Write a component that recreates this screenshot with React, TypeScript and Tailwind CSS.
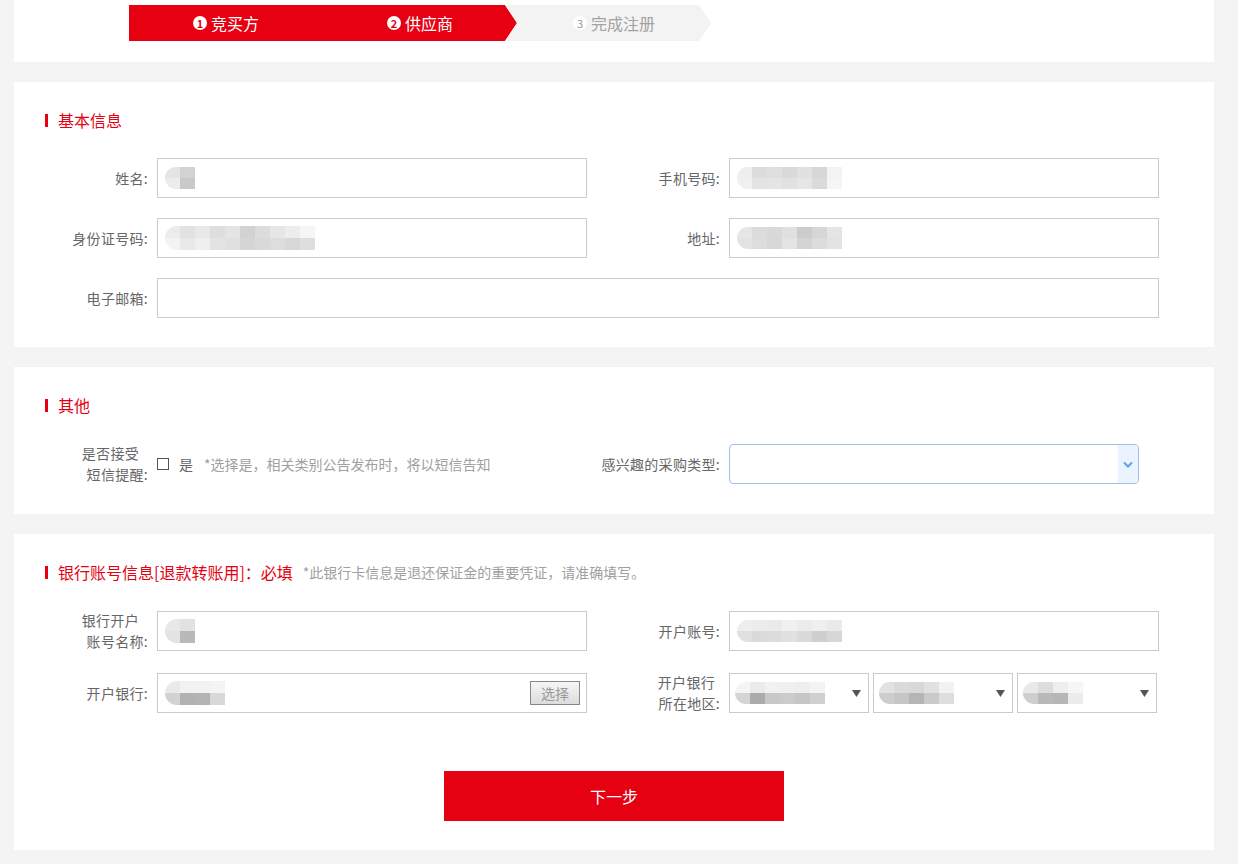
import React from "react";

type Cells = string[][];

const Mosaic = ({ cells, cw, ch }: { cells: Cells; cw: string; ch: string }) => {
  return (
    <div className="flex flex-col overflow-hidden rounded-l-full">
      {cells.map((row, i) => (
        <div key={i} className="flex">
          {row.map((c, j) => (
            <div key={j} className={`${cw} ${ch} ${c}`} />
          ))}
        </div>
      ))}
    </div>
  );
};

const nameCells: Cells = [
  ["bg-[#e4e4e4]", "bg-[#d2d2d2]"],
  ["bg-[#ececec]", "bg-[#c9c9c9]"],
];
const phoneCells: Cells = [
  ["bg-[#eeeeee]", "bg-[#dcdcdc]", "bg-[#dfdfdf]", "bg-[#d9d9d9]", "bg-[#e1e1e1]", "bg-[#d7d7d7]", "bg-[#f3f3f3]"],
  ["bg-[#f0f0f0]", "bg-[#e3e3e3]", "bg-[#e5e5e5]", "bg-[#e1e1e1]", "bg-[#e6e6e6]", "bg-[#dadada]", "bg-[#f5f5f5]"],
];
const idCells: Cells = [
  ["bg-[#ececec]", "bg-[#e2e2e2]", "bg-[#e8e8e8]", "bg-[#dedede]", "bg-[#e4e4e4]", "bg-[#d2d2d2]", "bg-[#dcdcdc]", "bg-[#e6e6e6]", "bg-[#ededed]", "bg-[#f6f6f6]"],
  ["bg-[#f3f3f3]", "bg-[#e9e9e9]", "bg-[#efefef]", "bg-[#e3e3e3]", "bg-[#e0e0e0]", "bg-[#d5d5d5]", "bg-[#d9d9d9]", "bg-[#dddddd]", "bg-[#d8d8d8]", "bg-[#dedede]"],
];
const addrCells: Cells = [
  ["bg-[#e6e6e6]", "bg-[#dcdcdc]", "bg-[#d9d9d9]", "bg-[#e0e0e0]", "bg-[#cccccc]", "bg-[#d6d6d6]", "bg-[#e5e5e5]", "bg-[#ffffff]"],
  ["bg-[#e3e3e3]", "bg-[#dddddd]", "bg-[#d8d8d8]", "bg-[#e4e4e4]", "bg-[#d4d4d4]", "bg-[#dcdcdc]", "bg-[#e3e3e3]", "bg-[#ffffff]"],
];
const accNameCells: Cells = [
  ["bg-[#e8e8e8]", "bg-[#e2e2e2]"],
  ["bg-[#e3e3e3]", "bg-[#b9b9b9]"],
];
const accNoCells: Cells = [
  ["bg-[#eeeeee]", "bg-[#ececec]", "bg-[#eaeaea]", "bg-[#f0f0f0]", "bg-[#ececec]", "bg-[#efefef]", "bg-[#eaeaea]", "bg-[#ffffff]"],
  ["bg-[#e0e0e0]", "bg-[#dadada]", "bg-[#dcdcdc]", "bg-[#e1e1e1]", "bg-[#dadada]", "bg-[#cfcfcf]", "bg-[#d7d7d7]", "bg-[#ffffff]"],
];
const bankCells: Cells = [
  ["bg-[#eaeaea]", "bg-[#f2f2f2]", "bg-[#f2f2f2]", "bg-[#f4f4f4]", "bg-[#ffffff]"],
  ["bg-[#d2d2d2]", "bg-[#b2b2b2]", "bg-[#b4b4b4]", "bg-[#d8d8d8]", "bg-[#ffffff]"],
];
const r1Cells: Cells = [
  ["bg-[#f4f4f4]", "bg-[#ebebeb]", "bg-[#f1f1f1]", "bg-[#f0f0f0]", "bg-[#eeeeee]", "bg-[#f3f3f3]"],
  ["bg-[#d4d4d4]", "bg-[#ababab]", "bg-[#c8c8c8]", "bg-[#cbcbcb]", "bg-[#c6c6c6]", "bg-[#d0d0d0]"],
];
const r2Cells: Cells = [
  ["bg-[#e2e2e2]", "bg-[#dadada]", "bg-[#d8d8d8]", "bg-[#e1e1e1]", "bg-[#f2f2f2]"],
  ["bg-[#cdcdcd]", "bg-[#c6c6c6]", "bg-[#b5b5b5]", "bg-[#cacaca]", "bg-[#dedede]"],
];
const r3Cells: Cells = [
  ["bg-[#e9e9e9]", "bg-[#dddddd]", "bg-[#eeeeee]", "bg-[#f6f6f6]"],
  ["bg-[#cecece]", "bg-[#b9b9b9]", "bg-[#b6b6b6]", "bg-[#ececec]"],
];

const Title = ({ children }: { children: React.ReactNode }) => (
  <div className="flex items-center pl-[31px] h-5">
    <span className="w-[3px] h-[13px] bg-[#e60012] mr-[10px]" />
    {children}
  </div>
);

const Label = ({ w, children }: { w: string; children: React.ReactNode }) => (
  <div className={`${w} text-right pr-[2px] text-[14px] leading-[21px] text-[#666] tracking-[0.3px]`}>{children}</div>
);

const TwoLine = ({ w, a, b, pad }: { w: string; a: string; b: string; pad: string }) => (
  <div className={`${w} h-10 flex flex-col justify-center items-end pr-[2px] text-[14px] leading-[21px] text-[#666] tracking-[0.3px]`}>
    <span className={pad}>{a}</span>
    <span>{b}</span>
  </div>
);

const Input = ({ w = "w-[430px]", children }: { w?: string; children?: React.ReactNode }) => (
  <div className={`ml-[7px] ${w} h-10 border border-[#cbcbcb] bg-white flex items-center pl-[7px]`}>{children}</div>
);

const Tri = () => (
  <svg width="9" height="7" viewBox="0 0 9 7" className="absolute right-[7px] top-[16px]">
    <polygon points="0,0 9,0 4.5,7" fill="#555" />
  </svg>
);

const Region = ({ cells, first }: { cells: Cells; first?: boolean }) => (
  <div className={`${first ? "ml-[7px]" : "ml-[4px]"} relative w-[140px] h-10 border border-[#cbcbcb] bg-white flex items-center pl-[5px]`}>
    <Mosaic cells={cells} cw="w-[15px]" ch="h-[11px]" />
    <Tri />
  </div>
);

export default function App() {
  return (
    <div className="min-h-[864px] bg-[#f4f4f4] font-['Noto_Sans_CJK_SC',sans-serif] pb-[14px]">
      {/* steps */}
      <div className="ml-[14px] w-[1200px] h-[62px] bg-white pt-[5px]">
        <div className="ml-[115px] flex h-9 text-[16px] leading-9">
          <div className="w-[194px] bg-[#e60012] text-white flex items-center justify-center">
            <span className="w-[14px] h-[14px] rounded-full bg-white text-[#e60012] text-[11px] font-bold leading-[14px] text-center mr-[4px]">1</span>
            竞买方
          </div>
          <div className="w-[194px] bg-[#e60012] text-white flex items-center justify-center [clip-path:polygon(0_0,calc(100%-12px)_0,100%_50%,calc(100%-12px)_100%,0_100%)]">
            <span className="w-[14px] h-[14px] rounded-full bg-white text-[#e60012] text-[11px] font-bold leading-[14px] text-center mr-[4px]">2</span>
            供应商
          </div>
          <div className="-ml-[12px] w-[206px] pl-[12px] bg-[#f3f3f3] text-[#a3a3a3] flex items-center justify-center [clip-path:polygon(0_0,calc(100%-12px)_0,100%_50%,calc(100%-12px)_100%,0_100%,12px_50%)]">
            <span className="w-[14px] h-[14px] rounded-full bg-white text-[#999] text-[11px] leading-[14px] text-center mr-[4px]">3</span>
            完成注册
          </div>
        </div>
      </div>

      {/* 基本信息 */}
      <div className="ml-[14px] mt-5 w-[1200px] bg-white pt-[28px] pb-[29px]">
        <Title>
          <span className="text-[16px] text-[#e60012]">基本信息</span>
        </Title>
        <div className="mt-[28px] pl-[43px] flex flex-col gap-5">
          <div className="flex items-center">
            <Label w="w-[93px]">姓名:</Label>
            <Input>
              <Mosaic cells={nameCells} cw="w-[15px]" ch="h-[11px]" />
            </Input>
            <Label w="w-[135px]">手机号码:</Label>
            <Input>
              <Mosaic cells={phoneCells} cw="w-[15px]" ch="h-[11px]" />
            </Input>
          </div>
          <div className="flex items-center">
            <Label w="w-[93px]">身份证号码:</Label>
            <Input>
              <Mosaic cells={idCells} cw="w-[15px]" ch="h-[12px]" />
            </Input>
            <Label w="w-[135px]">地址:</Label>
            <Input>
              <Mosaic cells={addrCells} cw="w-[15px]" ch="h-[11px]" />
            </Input>
          </div>
          <div className="flex items-center">
            <Label w="w-[93px]">电子邮箱:</Label>
            <Input w="w-[1002px]" />
          </div>
        </div>
      </div>

      {/* 其他 */}
      <div className="ml-[14px] mt-5 w-[1200px] bg-white pt-[28px] pb-[30px]">
        <Title>
          <span className="text-[16px] text-[#e60012]">其他</span>
        </Title>
        <div className="mt-[29px] pl-[26px] flex items-center">
          <TwoLine w="w-[110px]" a="是否接受" b="短信提醒:" pad="mr-[9px]" />
          <div className="ml-[7px] w-[430px] flex items-center text-[14px]">
            <span className="w-[12px] h-[12px] border border-[#555] bg-white" />
            <span className="ml-[10px] text-[#666]">是</span>
            <span className="ml-[11px] text-[#a0a0a0]">*选择是，相关类别公告发布时，将以短信告知</span>
          </div>
          <Label w="w-[135px]">感兴趣的采购类型:</Label>
          <div className="ml-[7px] w-[410px] h-10 border border-[#9dc1ec] rounded-[4px] bg-white flex justify-end overflow-hidden">
            <div className="w-[20px] h-full bg-[#eaf3fe] flex items-center justify-center">
              <svg width="10" height="7" viewBox="0 0 10 7">
                <polyline points="1,1.5 5,5.5 9,1.5" fill="none" stroke="#5ea3e9" strokeWidth="2" />
              </svg>
            </div>
          </div>
        </div>
      </div>

      {/* 银行账号信息 */}
      <div className="ml-[14px] mt-5 w-[1200px] bg-white pt-[28px] pb-[29px]">
        <Title>
          <span className="text-[16px] text-[#e60012]">银行账号信息[退款转账用]：必填</span>
          <span className="ml-[10px] text-[14px] text-[#a0a0a0]">*此银行卡信息是退还保证金的重要凭证，请准确填写。</span>
        </Title>
        <div className="mt-[29px] pl-[26px] flex flex-col gap-[22px]">
          <div className="flex items-center">
            <TwoLine w="w-[110px]" a="银行开户" b="账号名称:" pad="mr-[9px]" />
            <Input>
              <Mosaic cells={accNameCells} cw="w-[15px]" ch="h-[12px]" />
            </Input>
            <Label w="w-[135px]">开户账号:</Label>
            <Input>
              <Mosaic cells={accNoCells} cw="w-[15px]" ch="h-[11px]" />
            </Input>
          </div>
          <div className="flex items-center">
            <Label w="w-[110px]">开户银行:</Label>
            <div className="ml-[7px] w-[430px] h-10 border border-[#cbcbcb] bg-white flex items-center justify-between pl-[7px] pr-[6px]">
              <Mosaic cells={bankCells} cw="w-[15px]" ch="h-[12px]" />
              <button className="w-[50px] h-6 border border-[#888] bg-gradient-to-b from-[#f6f6f6] to-[#dcdcdc] text-[14px] leading-[22px] text-[#999]">
                选择
              </button>
            </div>
            <TwoLine w="w-[135px]" a="开户银行" b="所在地区:" pad="mr-[5px]" />
            <Region cells={r1Cells} first />
            <Region cells={r2Cells} />
            <Region cells={r3Cells} />
          </div>
        </div>
        <button className="block mx-auto mt-[58px] w-[340px] h-[50px] bg-[#e50012] text-white text-[16px]">下一步</button>
      </div>
    </div>
  );
}
